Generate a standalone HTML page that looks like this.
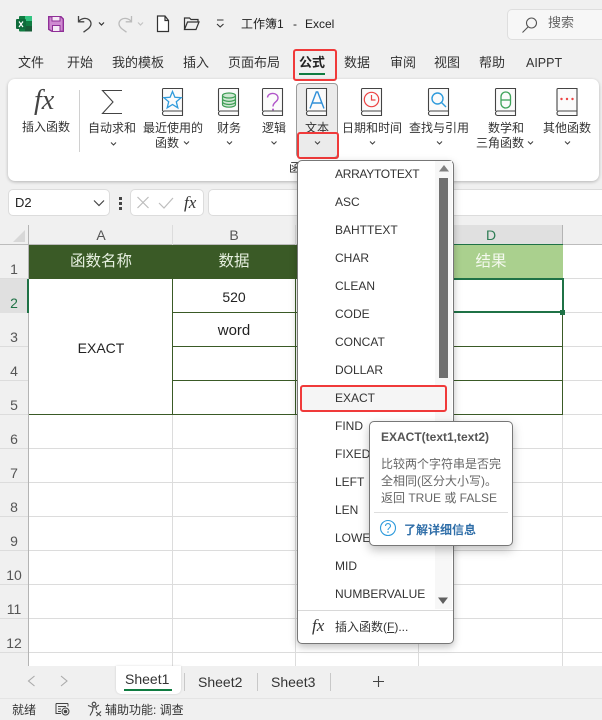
<!DOCTYPE html>
<html><head><meta charset="utf-8">
<style>
html,body{margin:0;padding:0;background:#f0f0f0}
#p{position:relative;width:602px;height:720px;overflow:hidden;background:#f0f0f0;font-family:"Liberation Sans","Noto Sans CJK SC",sans-serif;font-size:12px;color:#333}
.t{position:absolute;white-space:nowrap;line-height:20px;height:20px}
.c{transform:translateX(-50%)}
.b{position:absolute;box-sizing:border-box}
svg{position:absolute;overflow:visible}
.tab{font-size:13px;top:53px}
.rb{font-size:12px;color:#333}
.m{left:335px;font-size:12px;color:#333}
.rn{left:14px;font-size:14px;color:#555;transform:translateX(-50%)}
.h{font-size:14px;color:#555;top:225px;transform:translateX(-50%)}
.ln{position:absolute;background:#dcdcdc}
.d{position:absolute;background:#3a5a26}
.sf{font-family:"Liberation Serif",serif;font-style:italic}
</style></head><body><div id="p">

<!-- title bar -->
<svg style="left:0;top:0" width="240" height="40" fill="none">
<rect x="19" y="16" width="13" height="15.500" rx="1" fill="#107c41"/><rect x="25" y="16" width="7" height="5" fill="#33c481"/><rect x="25" y="26" width="7" height="5.500" fill="#185c37"/><rect x="16" y="19" width="10" height="10" rx="1" fill="#0f6b3b"/>
<path d="M19 21.500l4 5.500M23 21.500l-4 5.500" stroke="#fff" stroke-width="1.200"/>
<path d="M48.700 16.700h12.300l2.300 2.300v12.300H52l-3.300-2z" fill="#cf8ad1" stroke="#8f2f97" stroke-width="1.400"/><rect x="52" y="16.500" width="8" height="4.500" fill="#f6e9f6" stroke="#8f2f97"/><rect x="52.500" y="25.500" width="7.500" height="6" fill="#f6e9f6" stroke="#8f2f97"/>
<path d="M78.500 16v5.800h5.800M78.500 21.500c3-3.500 7.500-4 10.500-1.800 3 2.500 2.500 6-.5 8.800l-5 3.700" stroke="#444" stroke-width="1.300"/>
<path d="M99 22.500l2.500 2.500 2.500-2.500" stroke="#333" stroke-width="1.200"/>
<path d="M131.500 16v5.800h-5.800M131.500 21.500c-3-3.500-7.500-4-10.500-1.800-3 2.500-2.500 6 .5 8.800l5 3.700" stroke="#bbb" stroke-width="1.300"/>
<path d="M138 22.500l2.500 2.500 2.500-2.500" stroke="#c4c4c4" stroke-width="1.200"/>
<path d="M157.500 16h7.500l3.500 4.500V31.500h-11zM165 16v4.500h3.500" stroke="#333" stroke-width="1.200" fill="#fff"/>
<path d="M184.500 29.500V18h5l1.500 1.500h7V22M184.500 29.500l3-7.500h11.500l-3 7.500z" stroke="#333" stroke-width="1.200"/>
<path d="M217 20h6.500M217 24l3.200 3 3.300-3" stroke="#333" stroke-width="1.100"/>
</svg>
<span class="t" style="left:241px;top:14px;font-size:12px;color:#222">工作簿1</span>
<span class="t" style="left:293px;top:14px;font-size:12px;color:#222">-</span>
<span class="t" style="left:305px;top:14px;font-size:12px;color:#222">Excel</span>
<div class="b" style="left:507px;top:9px;width:110px;height:31px;background:#f7f7f7;border:1px solid #dedede;border-radius:5px"></div>
<svg style="left:520px;top:15px" width="20" height="20" fill="none"><circle cx="11.500" cy="8" r="5" stroke="#555" stroke-width="1.100"/><path d="M8 12l-5.500 5.500" stroke="#555" stroke-width="1.100"/></svg>
<span class="t" style="left:548px;top:13px;font-size:13px;color:#666">搜索</span>

<!-- tabs -->
<span class="t tab" style="left:18px">文件</span>
<span class="t tab" style="left:67px">开始</span>
<span class="t tab" style="left:112px">我的模板</span>
<span class="t tab" style="left:183px">插入</span>
<span class="t tab" style="left:228px">页面布局</span>
<span class="t tab" style="left:299px;font-weight:bold;color:#222">公式</span>
<span class="t tab" style="left:344px">数据</span>
<span class="t tab" style="left:390px">审阅</span>
<span class="t tab" style="left:434px">视图</span>
<span class="t tab" style="left:479px">帮助</span>
<span class="t tab" style="left:526px;font-size:12.500px">AIPPT</span>
<div class="b" style="left:299px;top:73px;width:26px;height:2px;background:#107c41"></div>

<!-- ribbon -->
<div class="b" style="left:8px;top:79px;width:591px;height:102px;background:#fff;border-radius:7px;box-shadow:0 1px 3px rgba(0,0,0,.25)"></div>
<div class="b" style="left:79px;top:90px;width:1px;height:62px;background:#d0d0d0"></div>
<div class="b" style="left:296px;top:83px;width:42px;height:75px;background:#ebebeb;border:1px solid #9a9a9a;border-radius:4px"></div>

<span class="sf" style="position:absolute;left:34px;top:85px;font-size:28px;line-height:32px;color:#444">fx</span>

<svg style="left:0;top:0" width="602" height="130" fill="none">
<defs><path id="bk" d="M.5 23V1.500a1 1 0 0 1 1-1H20.500V27.500H2.500a2 2 0 0 1-2-2V25a2 2 0 0 1 2-2H20.500" stroke="#444" stroke-width="1.100" fill="#fbfbfb"/></defs>
<path d="M122 90.500H102.500L113 102 102.500 113.500H122" stroke="#444" stroke-width="1.100"/>
<use href="#bk" x="162" y="88"/>
<path d="M172.500 91.500L174.900 97.300 181.100 97.700 176.300 101.700 177.800 107.800 172.500 104.500 167.200 107.800 168.700 101.700 163.900 97.700 170.100 97.300Z" stroke="#2f9bdc" stroke-width="1.300"/>
<use href="#bk" x="218" y="88"/>
<g stroke="#3f9e56" stroke-width="1.200" fill="#cfe8d3"><path d="M222.500 95.500v9c0 1.500 2.900 2.700 6.500 2.700s6.500-1.200 6.500-2.700v-9"/><ellipse cx="229" cy="95.500" rx="6.500" ry="2.500"/><path d="M222.500 98.700c0 1.500 2.900 2.700 6.500 2.700s6.500-1.200 6.500-2.700M222.500 101.800c0 1.500 2.900 2.700 6.500 2.700s6.500-1.200 6.500-2.700" fill="none"/></g>
<use href="#bk" x="262" y="88"/>
<path d="M267.500 97.500c.3-5.500 10.500-5.500 10.500.5 0 4-5 4-5 8.500" stroke="#b055c9" stroke-width="1.400"/><circle cx="273" cy="109.500" r="1" fill="#b055c9"/>
<use href="#bk" x="306" y="88"/>
<path d="M310 108.500l6.300-16.500h1.400l6.300 16.500M312 103h10" stroke="#2f8fd8" stroke-width="1.400"/>
<use href="#bk" x="361" y="88"/>
<circle cx="371.500" cy="99.500" r="7.200" stroke="#ec4343" stroke-width="1.200"/><path d="M371.500 95v5h4" stroke="#ec4343" stroke-width="1.200"/>
<use href="#bk" x="428" y="88"/>
<circle cx="437.500" cy="98.500" r="5.500" stroke="#2f9bdc" stroke-width="1.400"/><path d="M441.500 102.500l4.500 4.500" stroke="#2f9bdc" stroke-width="1.400"/>
<use href="#bk" x="495" y="88"/>
<rect x="501" y="92" width="9.500" height="16" rx="4.700" stroke="#3fa35a" stroke-width="1.300"/><path d="M501 100h9.500" stroke="#3fa35a" stroke-width="1.300"/>
<use href="#bk" x="556.500" y="88"/>
<circle cx="561.500" cy="99" r="1.200" fill="#ec4343"/><circle cx="567" cy="99" r="1.200" fill="#ec4343"/><circle cx="572.500" cy="99" r="1.200" fill="#ec4343"/>
</svg>

<span class="t rb c" style="left:46px;top:117px">插入函数</span>
<span class="t rb c" style="left:112px;top:118px">自动求和</span>
<span class="t rb c" style="left:173px;top:118px">最近使用的</span>
<span class="t rb c" style="left:167px;top:133px">函数</span>
<span class="t rb c" style="left:229px;top:118px">财务</span>
<span class="t rb c" style="left:274px;top:118px">逻辑</span>
<span class="t rb c" style="left:317px;top:118px">文本</span>
<span class="t rb c" style="left:372px;top:118px">日期和时间</span>
<span class="t rb c" style="left:439px;top:118px">查找与引用</span>
<span class="t rb c" style="left:506px;top:118px">数学和</span>
<span class="t rb c" style="left:500px;top:133px">三角函数</span>
<span class="t rb c" style="left:567px;top:118px">其他函数</span>
<span class="t rb" style="left:289px;top:158px">函</span>
<svg style="left:0;top:130px" width="602" height="24" fill="none" stroke="#444" stroke-width="1.100">
<path d="M111 12.500l2.500 2.500 2.500-2.500M184 11.500l2.500 2.500 2.500-2.500M227 11.500l2.500 2.500 2.500-2.500M271.500 11.500l2.500 2.500 2.500-2.500M315 11.500l2.500 2.500 2.500-2.500M370 11.500l2.500 2.500 2.500-2.500M437 11.500l2.500 2.500 2.500-2.500M528 11.500l2.500 2.500 2.500-2.500M565 11.500l2.500 2.500 2.500-2.500"/>
</svg>

<!-- formula bar -->
<div class="b" style="left:8px;top:189px;width:102px;height:27px;background:#fff;border:1px solid #dcdcdc;border-radius:5px"></div>
<span class="t" style="left:15px;top:193px;font-size:13px;color:#222">D2</span>
<svg style="left:92px;top:198px" width="14" height="10" fill="none"><path d="M2 2.500l5 5 5-5" stroke="#444" stroke-width="1.200"/></svg>
<div class="b" style="left:119px;top:197px;width:3px;height:3px;background:#444"></div><div class="b" style="left:119px;top:202px;width:3px;height:3px;background:#444"></div><div class="b" style="left:119px;top:207px;width:3px;height:3px;background:#444"></div>
<div class="b" style="left:130px;top:189px;width:74px;height:27px;background:#fff;border:1px solid #dcdcdc;border-radius:5px"></div>
<svg style="left:136px;top:195px" width="40" height="16" fill="none"><path d="M1.500 2l11 11M12.500 2l-11 11" stroke="#bdbdbd" stroke-width="1.200"/><path d="M23 8l5 5 9-10" stroke="#bdbdbd" stroke-width="1.200"/></svg>
<span class="sf" style="position:absolute;left:184px;top:194px;font-size:17px;line-height:18px;color:#333">fx</span>
<div class="b" style="left:208px;top:189px;width:420px;height:27px;background:#fff;border:1px solid #dcdcdc;border-radius:5px"></div>

<!-- grid -->
<div class="b" style="left:29px;top:245px;width:573px;height:421px;background:#fff"></div>
<div class="b" style="left:0;top:225px;width:29px;height:441px;background:#f0f0f0"></div>
<div class="b" style="left:419px;top:225px;width:144px;height:20px;background:#e0e0e0"></div>
<div class="b" style="left:0;top:244px;width:602px;height:1px;background:#bcbcbc"></div>
<div class="b" style="left:28px;top:225px;width:1px;height:441px;background:#b4b4b4"></div>
<svg style="left:12px;top:229px" width="14" height="14"><path d="M13 1v12H1z" fill="#d8d8d8"/></svg>
<div class="ln" style="left:172px;top:225px;width:1px;height:20px"></div>
<div class="ln" style="left:295px;top:225px;width:1px;height:20px"></div>
<div class="b" style="left:562px;top:225px;width:1px;height:20px;background:#b4b4b4"></div>

<!-- grid lines -->
<div class="ln" style="left:172px;top:414px;width:1px;height:252px"></div>
<div class="ln" style="left:295px;top:414px;width:1px;height:252px"></div>
<div class="ln" style="left:418px;top:414px;width:1px;height:252px"></div>
<div class="ln" style="left:562px;top:414px;width:1px;height:252px"></div>
<div class="ln" style="left:29px;top:448px;width:573px;height:1px"></div>
<div class="ln" style="left:29px;top:482px;width:573px;height:1px"></div>
<div class="ln" style="left:29px;top:516px;width:573px;height:1px"></div>
<div class="ln" style="left:29px;top:550px;width:573px;height:1px"></div>
<div class="ln" style="left:29px;top:584px;width:573px;height:1px"></div>
<div class="ln" style="left:29px;top:618px;width:573px;height:1px"></div>
<div class="ln" style="left:29px;top:652px;width:573px;height:1px"></div>
<div class="ln" style="left:563px;top:278px;width:39px;height:1px"></div>
<div class="ln" style="left:563px;top:312px;width:39px;height:1px"></div>
<div class="ln" style="left:563px;top:346px;width:39px;height:1px"></div>
<div class="ln" style="left:563px;top:380px;width:39px;height:1px"></div>
<div class="ln" style="left:563px;top:414px;width:39px;height:1px"></div>
<div class="ln" style="left:0;top:278px;width:28px;height:1px"></div>
<div class="ln" style="left:0;top:346px;width:28px;height:1px"></div>
<div class="ln" style="left:0;top:380px;width:28px;height:1px"></div>
<div class="ln" style="left:0;top:414px;width:28px;height:1px"></div>
<div class="ln" style="left:0;top:448px;width:28px;height:1px"></div>
<div class="ln" style="left:0;top:482px;width:28px;height:1px"></div>
<div class="ln" style="left:0;top:516px;width:28px;height:1px"></div>
<div class="ln" style="left:0;top:550px;width:28px;height:1px"></div>
<div class="ln" style="left:0;top:584px;width:28px;height:1px"></div>
<div class="ln" style="left:0;top:618px;width:28px;height:1px"></div>
<div class="ln" style="left:0;top:652px;width:28px;height:1px"></div>

<!-- table -->
<div class="b" style="left:29px;top:245px;width:420px;height:34px;background:#3a5a26"></div>
<div class="b" style="left:449px;top:245px;width:114px;height:34px;background:#aad08e"></div>
<div class="d" style="left:29px;top:414px;width:534px;height:1px"></div>
<div class="d" style="left:172px;top:278px;width:1px;height:136px"></div>
<div class="d" style="left:295px;top:278px;width:1px;height:136px"></div>
<div class="d" style="left:173px;top:312px;width:390px;height:1px"></div>
<div class="d" style="left:173px;top:346px;width:390px;height:1px"></div>
<div class="d" style="left:173px;top:380px;width:390px;height:1px"></div>
<div class="d" style="left:562px;top:313px;width:1px;height:101px"></div>
<div class="b" style="left:419px;top:244px;width:144px;height:1px;background:#1f7246"></div>
<div class="b" style="left:0;top:279px;width:28px;height:34px;background:#e0e0e0"></div>
<div class="b" style="left:27px;top:279px;width:2px;height:34px;background:#1f7246"></div>
<!-- selection -->
<div class="b" style="left:419px;top:278px;width:145px;height:35px;border:2px solid #1f7246;border-left:none"></div>
<div class="b" style="left:560px;top:310px;width:5px;height:5px;background:#1f7246"></div>

<span class="t c" style="left:101px;top:252px;font-size:15.500px;color:#e6efdf">函数名称</span>
<span class="t c" style="left:234px;top:252px;font-size:15.500px;color:#e6efdf">数据</span>
<span class="t c" style="left:491px;top:252px;font-size:15.500px;color:#f4f9ee">结果</span>
<span class="t c" style="left:101px;top:338px;font-size:14px;color:#222">EXACT</span>
<span class="t c" style="left:234px;top:287px;font-size:14px;color:#222">520</span>
<span class="t c" style="left:234px;top:321px;font-size:15px;color:#222">word</span>

<span class="t h" style="left:101px">A</span>
<span class="t h" style="left:234px">B</span>
<span class="t h" style="left:491px;color:#2e7d55">D</span>
<span class="t rn" style="top:259px">1</span>
<span class="t rn" style="top:293px;color:#1f7246">2</span>
<span class="t rn" style="top:327px">3</span>
<span class="t rn" style="top:361px">4</span>
<span class="t rn" style="top:395px">5</span>
<span class="t rn" style="top:429px">6</span>
<span class="t rn" style="top:463px">7</span>
<span class="t rn" style="top:497px">8</span>
<span class="t rn" style="top:531px">9</span>
<span class="t rn" style="top:565px">10</span>
<span class="t rn" style="top:599px">11</span>
<span class="t rn" style="top:633px">12</span>

<!-- red boxes -->
<div class="b" style="left:293px;top:49px;width:44px;height:32px;border:2px solid #f03a3a;border-radius:3px"></div>
<div class="b" style="left:297px;top:132px;width:42px;height:27px;border:2px solid #f03a3a;border-radius:3px"></div>

<!-- menu -->
<div class="b" style="left:297px;top:160px;width:157px;height:484px;background:#fff;border:1px solid #777;border-radius:5px;box-shadow:0 3px 8px rgba(0,0,0,.25)"></div>
<div class="b" style="left:435px;top:161px;width:17px;height:448px;background:#f7f7f7"></div>
<div class="b" style="left:439px;top:178px;width:9px;height:200px;background:#707070"></div>
<svg style="left:438px;top:164px" width="12" height="9"><path d="M6 1l5 6.500H1z" fill="#808080"/></svg>
<svg style="left:437px;top:596px" width="12" height="9"><path d="M6 8L1 1.500h10z" fill="#606060"/></svg>
<span class="t m" style="top:164px;letter-spacing:-.3px">ARRAYTOTEXT</span>
<span class="t m" style="top:192px">ASC</span>
<span class="t m" style="top:220px">BAHTTEXT</span>
<span class="t m" style="top:248px">CHAR</span>
<span class="t m" style="top:276px">CLEAN</span>
<span class="t m" style="top:304px">CODE</span>
<span class="t m" style="top:332px">CONCAT</span>
<span class="t m" style="top:360px">DOLLAR</span>
<div class="b" style="left:300px;top:385px;width:147px;height:27px;background:#f5f5f5;border:2px solid #f03a3a;border-radius:3px"></div>
<span class="t m" style="top:388px">EXACT</span>
<span class="t m" style="top:416px">FIND</span>
<span class="t m" style="top:444px">FIXED</span>
<span class="t m" style="top:472px">LEFT</span>
<span class="t m" style="top:500px">LEN</span>
<span class="t m" style="top:528px">LOWER</span>
<span class="t m" style="top:556px">MID</span>
<span class="t m" style="top:584px">NUMBERVALUE</span>
<div class="b" style="left:298px;top:610px;width:155px;height:1px;background:#d8d8d8"></div>
<span class="sf" style="position:absolute;left:312px;top:617px;font-size:17px;line-height:18px;color:#333">fx</span>
<span class="t" style="left:335px;top:617px;font-size:12px;color:#333">插入函数(<u>F</u>)...</span>

<!-- tooltip -->
<div class="b" style="left:369px;top:421px;width:144px;height:125px;background:#fff;border:1px solid #777;border-radius:5px;box-shadow:0 4px 10px rgba(0,0,0,.25)"></div>
<span class="t" style="left:381px;top:427px;font-size:12px;font-weight:bold;color:#555">EXACT(text1,text2)</span>
<span class="t" style="left:381px;top:454px;font-size:12px;color:#666">比较两个字符串是否完</span>
<span class="t" style="left:381px;top:471px;font-size:12px;color:#666">全相同(区分大小写)。</span>
<span class="t" style="left:381px;top:488px;font-size:12px;color:#666">返回 TRUE 或 FALSE</span>
<div class="b" style="left:374px;top:512px;width:134px;height:1px;background:#dedede"></div>
<svg style="left:379px;top:519px" width="18" height="18" fill="none"><circle cx="9" cy="9" r="7.500" stroke="#2f9bdc" stroke-width="1.100"/><path d="M6.500 7c0-3.300 5-3.300 5 0 0 2-2.500 2-2.500 4" stroke="#2f9bdc" stroke-width="1.100"/><circle cx="9" cy="13" r=".8" fill="#2f9bdc"/></svg>
<span class="t" style="left:404px;top:520px;font-size:12px;font-weight:bold;color:#2f6ea8">了解详细信息</span>

<!-- sheet tabs -->
<div class="b" style="left:0;top:666px;width:602px;height:32px;background:#f0f0f0"></div>
<div class="b" style="left:116px;top:666px;width:65px;height:28px;background:#fff;border-radius:0 0 5px 5px;box-shadow:0 0 2px rgba(0,0,0,.15)"></div>
<div class="b" style="left:124px;top:689px;width:48px;height:2px;background:#107c41"></div>
<svg style="left:25px;top:674px" width="50" height="14" fill="none"><path d="M9.500 2l-6 5 6 5" stroke="#aaa" stroke-width="1.100"/><path d="M36 2l6 5-6 5" stroke="#aaa" stroke-width="1.100"/></svg>
<span class="t" style="left:125px;top:669px;font-size:14px;color:#333">Sheet1</span>
<span class="t" style="left:198px;top:672px;font-size:14px;color:#333">Sheet2</span>
<span class="t" style="left:271px;top:672px;font-size:14px;color:#333">Sheet3</span>
<div class="b" style="left:184px;top:673px;width:1px;height:18px;background:#c8c8c8"></div>
<div class="b" style="left:257px;top:673px;width:1px;height:18px;background:#c8c8c8"></div>
<div class="b" style="left:330px;top:673px;width:1px;height:18px;background:#c8c8c8"></div>
<svg style="left:372px;top:675px" width="14" height="14" fill="none"><path d="M6.500 1v11M1 6.500h11" stroke="#444" stroke-width="1.100"/></svg>

<!-- status bar -->
<div class="b" style="left:0;top:698px;width:602px;height:1px;background:#e4e4e4"></div>
<span class="t" style="left:12px;top:700px;font-size:12px;color:#333">就绪</span>
<svg style="left:55px;top:702px" width="15" height="14" fill="none" stroke="#444"><path d="M1 1.500h12M1 1.500v10h5M13 1.500v3M3 4.500h8M3 7h3M3 9.500h3"/><circle cx="10.500" cy="9.500" r="3.500"/><circle cx="10.500" cy="9.500" r="1.300" fill="#444"/></svg>
<svg style="left:87px;top:701px" width="16" height="16" fill="none" stroke="#444" stroke-width="1.100"><circle cx="7" cy="3" r="1.800"/><path d="M1 4.500l4 1.500h4l3-2M6 6l-.5 4L3 14.500M9 6l.5 3M9 11l5 4M14 10.500l-4.500 4.500"/></svg>
<span class="t" style="left:105px;top:700px;font-size:12px;color:#333">辅助功能: 调查</span>

</div></body></html>
